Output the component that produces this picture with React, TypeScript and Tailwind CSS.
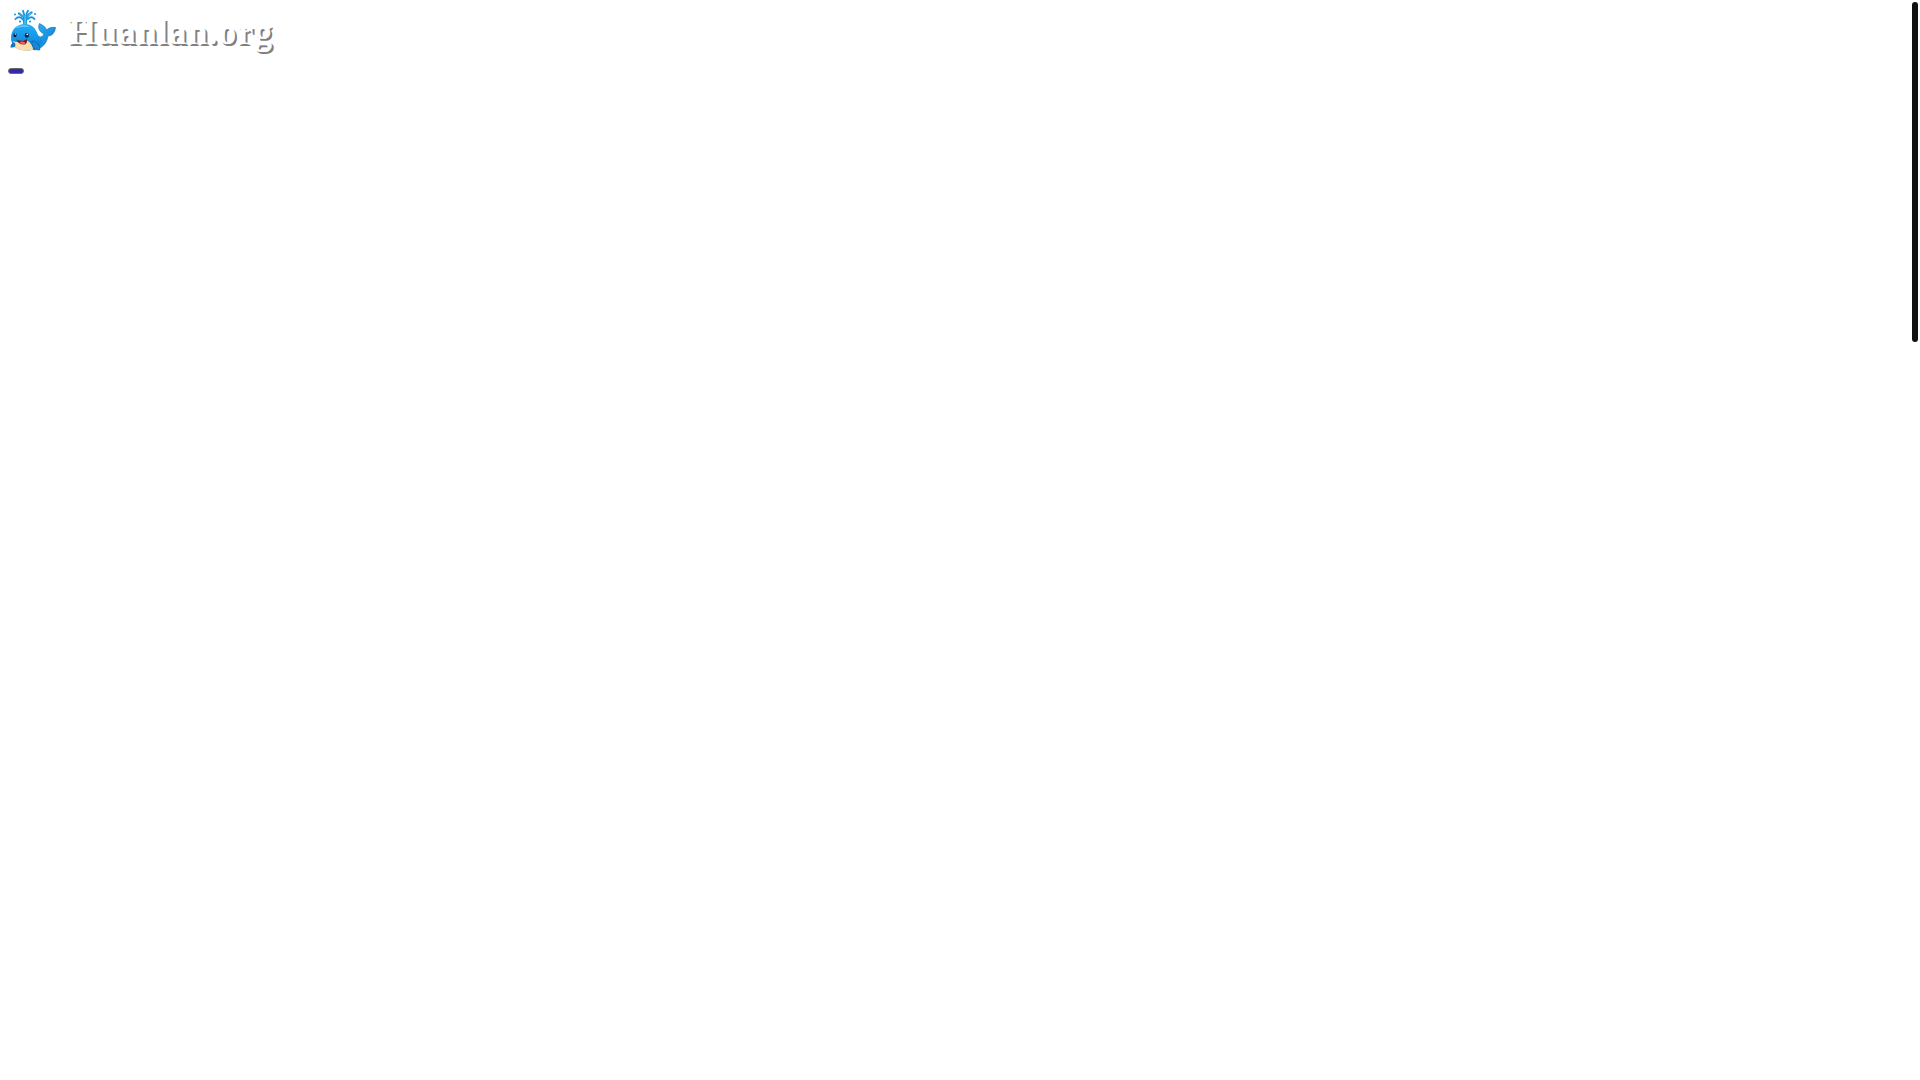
const Whale = () => {
  return (
    <svg className="h-12 w-12" viewBox="0 0 48 48" aria-hidden="true">
      <defs>
        <linearGradient id="body" x1="0" y1="0" x2="0" y2="1">
          <stop offset="0" stopColor="#22aef8" />
          <stop offset="0.6" stopColor="#1590e4" />
          <stop offset="1" stopColor="#0c68b8" />
        </linearGradient>
        <linearGradient id="tail" x1="0" y1="0" x2="1" y2="1">
          <stop offset="0" stopColor="#2bb3f8" />
          <stop offset="1" stopColor="#0f78cb" />
        </linearGradient>
      </defs>
      {/* water */}
      <g fill="none" stroke="#1b95de" strokeLinecap="round">
        <path d="M16.500 17C16.500 12 15.500 8 11 5.500" strokeWidth="2.400" />
        <path d="M17.500 17C17.500 12 19 7 23.500 4.500" strokeWidth="2.400" />
        <path d="M16.500 10C16.500 7 15.800 5 15 2.800" strokeWidth="1.900" />
        <path d="M18 9C18 6.500 18.800 4.500 20 2.800" strokeWidth="1.900" />
        <path d="M14.500 11C12.500 8.500 9.500 8.500 7.500 11" strokeWidth="2" />
        <path d="M20 11C22 8.500 24.500 8.500 26.500 11" strokeWidth="2" />
        <path d="M17 16C17.300 13 17 10 17.300 8" stroke="#5dcffb" strokeWidth="1.200" />
        <path d="M11.500 6C13 7 14 8 14.500 9.500M23 5.200C21.500 6 20.500 7 19.800 8.500" stroke="#5dcffb" strokeWidth="0.800" />
      </g>
      <g fill="#1b95de">
        <circle cx="7" cy="6.500" r="1" />
        <circle cx="27" cy="6" r="1" />
        <circle cx="12" cy="13.500" r="1.100" />
        <circle cx="22" cy="13.500" r="1.100" />
      </g>
      {/* tail */}
      <path
        d="M26 27C31 30 34.500 29.500 36 26C32.500 24.500 29 20.500 31.500 15.500C34.500 17 37.500 18.500 38.500 22C41 19.500 44 19 47.500 19.500C47 24.500 44 28 40 28C39 35 34 41 26 42Z"
        fill="url(#tail)"
        stroke="#0870b8"
        strokeWidth="0.600"
      />
      {/* body */}
      <path
        d="M3 30C3 21.500 9 16 17 16C24.500 16 28 21 30 27L34 31C34 38 28 42.500 19 42.500C10 42.500 3 38.500 3 30Z"
        fill="url(#body)"
      />
      <path d="M8 20C11 17 18 16.200 22 19C18 18.500 12 19 8 20Z" fill="#66cdfb" />
      <path d="M5 33C9 35.500 14 33 18 32C22 34 25.500 38 25 41.500C20 43.500 12 43 7 39Z" fill="#f9dfae" />
      <path d="M8.500 31.500C12 33.500 16 33 19 31C19.500 34.500 18 37 15 36.500C11.500 36 9.500 34.500 8.500 31.500Z" fill="#6b1e28" />
      <path d="M11.500 34.500C13 33 16 33.200 17.500 35C16.500 37 13.500 36.500 11.500 34.500Z" fill="#f2625a" />
      {/* fins */}
      <path d="M24 33C29 33.500 32 37.500 32 42C27 42.500 23 39 24 33Z" fill="#1787d8" stroke="#07599b" strokeWidth="0.500" />
      <path d="M6.500 34.500C4 34.500 2.500 37 2.500 39.500C6 40 9 38.500 6.500 34.500Z" fill="#1573c0" />
      {/* eyes */}
      <ellipse cx="7" cy="27" rx="1.600" ry="2.300" fill="#0b1e36" />
      <ellipse cx="18.800" cy="27.300" rx="2" ry="2.500" fill="#0b1e36" />
      <circle cx="7.300" cy="26" r="0.700" fill="#fff" />
      <circle cx="19.300" cy="26.300" r="0.900" fill="#fff" />
    </svg>
  )
}

const App = () => {
  return (
    <div className="min-h-screen bg-white p-2">
      <header className="flex h-12 items-center gap-3">
        <Whale />
        <h1 className="font-['Liberation_Serif',serif] text-4xl font-bold tracking-wide text-white [text-shadow:2px_2px_0_#808080]">
          Huanlan.org
        </h1>
      </header>
      <button
        type="button"
        aria-label="Menu"
        className="mt-3 block h-1.5 w-4 rounded-sm border border-[#6b6b6b] bg-[#3528b0]"
      ></button>
      {/* scroll thumb */}
      <div className="fixed top-0.5 right-0.5 h-[340px] w-1.5 rounded-full bg-[#111111]"></div>
    </div>
  )
}

export default App
